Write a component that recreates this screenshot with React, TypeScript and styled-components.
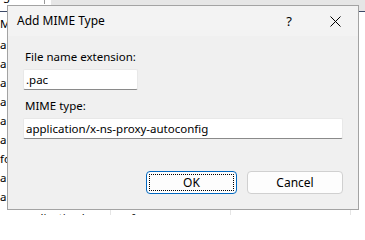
import React from 'react';
import styled, { createGlobalStyle } from 'styled-components';

const GlobalStyle = createGlobalStyle`
  html, body { margin: 0; padding: 0; background: #fff; }
  body {
    font-family: "Segoe UI", "Noto Sans", sans-serif;
    font-size: 11.5px;
    color: #000;
  }
  * { box-sizing: border-box; }
`;

const Screen = styled.div`
  position: relative;
  width: 365px;
  height: 215px;
  overflow: hidden;
  background: #fff;
`;

/* the list window behind the dialog */
const Backdrop = styled.div`
  display: flex;
  flex-direction: column;
`;

const TabStrip = styled.div`
  display: flex;
  height: 11px;
  background: #e6e6e6;
`;

const Tab = styled.div`
  display: flex;
  justify-content: space-between;
  width: 51px;
  padding-right: 6px;
  background: #fff;
  overflow: hidden;
`;

const TabText = styled.span`
  margin-top: -12px;
  line-height: 16px;
  white-space: nowrap;
`;

const TabTick = styled.span`
  width: 1px;
  height: 4px;
  background: #9a9a9a;
`;

const Rule = styled.div`
  height: 1px;
  background: #3d4a68;
`;

const Column = styled.div`
  display: flex;
  flex-direction: column;
  width: 7px;
  overflow: hidden;
`;

const Row = styled.div<{ $h: number }>`
  display: flex;
  align-items: center;
  height: ${p => p.$h}px;
  line-height: 16px;
  white-space: nowrap;
`;

const LastRow = styled.div`
  display: flex;
  height: 19px;
  padding-left: 18px;
  padding-top: 4px;
  line-height: 16px;
  white-space: nowrap;
`;

const Cell = styled.span<{ $w: number }>`
  width: ${p => p.$w}px;
  flex: none;
  padding-left: 2px;
  overflow: hidden;
  border-right: 1px solid #e5e5e5;
`;

/* the dialog */
const Dialog = styled.div`
  position: absolute;
  left: 7px;
  top: 5px;
  width: 352px;
  height: 205px;
  border: 1px solid #a3a3a3;
  background: #f0f0f0;
  display: flex;
  flex-direction: column;
`;

const TitleBar = styled.div`
  display: flex;
  align-items: center;
  height: 30px;
  padding-left: 9px;
  background: #f3f3f3;
`;

const Title = styled.span`
  flex: 1;
  line-height: 16px;
  font-size: 12px;
`;

const CaptionButton = styled.span`
  display: flex;
  align-items: center;
  justify-content: center;
  width: 46px;
  height: 30px;
  font-size: 13px;
`;

const Body = styled.div`
  display: flex;
  flex-direction: column;
  flex: 1;
  padding: 13px 15px 15px 15px;
`;

const Label = styled.label<{ $gap?: number }>`
  line-height: 16px;
  padding-left: 2px;
  margin-top: ${p => p.$gap ?? 0}px;
  margin-bottom: 4px;
`;

const Field = styled.div<{ $w?: number }>`
  display: flex;
  align-items: center;
  width: ${p => (p.$w ? `${p.$w}px` : '100%')};
  height: 21px;
  padding-left: 2px;
  background: #fff;
  border: 1px solid #e8e8e8;
  border-bottom-color: #8a8a8a;
  border-radius: 2px;
  line-height: 16px;
  white-space: nowrap;
  overflow: hidden;
`;

const Actions = styled.div`
  display: flex;
  justify-content: flex-end;
  gap: 10px;
  margin-top: auto;
`;

const Button = styled.button<{ $w: number; $default?: boolean }>`
  position: relative;
  width: ${p => p.$w}px;
  height: 23px;
  padding: 0;
  font: inherit;
  font-size: 12px;
  color: #000;
  background: #fdfdfd;
  border: 1px solid ${p => (p.$default ? '#0067c0' : '#d0d0d0')};
  border-radius: 4px;
  line-height: 16px;
`;

const FocusRing = styled.span`
  position: absolute;
  inset: 2px;
  border: 1px dotted #000;
  border-radius: 1px;
`;

const CloseIcon = () => (
  <svg width="11" height="11" viewBox="0 0 11 11">
    <path d="M0.5 0.5 L10.5 10.5 M10.5 0.5 L0.5 10.5" stroke="#000" strokeWidth="1" fill="none" />
  </svg>
);

const rows = [
  { h: 23, text: 'M' },
  { h: 19, text: 'ap' },
  { h: 19, text: 'ap' },
  { h: 19, text: 'ap' },
  { h: 19, text: 'ap' },
  { h: 19, text: 'ap' },
  { h: 19, text: 'ap' },
  { h: 19, text: 'fo' },
  { h: 19, text: 'ap' },
  { h: 19, text: 'ap' },
];

const App = () => (
  <>
    <GlobalStyle />
    <Screen>
      <Backdrop>
        <TabStrip>
          <Tab>
            <TabText>ig</TabText>
            <TabTick />
          </Tab>
        </TabStrip>
        <Rule />
        <Column>
          {rows.map((r, i) => (
            <Row key={i} $h={r.h}>{r.text}</Row>
          ))}
        </Column>
        <LastRow>
          <Cell $w={93}>application/</Cell>
          <Cell $w={120}>.swf</Cell>
          <Cell $w={120}>&nbsp;</Cell>
        </LastRow>
      </Backdrop>

      <Dialog role="dialog" aria-label="Add MIME Type">
        <TitleBar>
          <Title>Add MIME Type</Title>
          <CaptionButton>?</CaptionButton>
          <CaptionButton><CloseIcon /></CaptionButton>
        </TitleBar>
        <Body>
          <Label>File name extension:</Label>
          <Field $w={115}>.pac</Field>
          <Label $gap={8}>MIME type:</Label>
          <Field>application/x-ns-proxy-autoconfig</Field>
          <Actions>
            <Button $w={91} $default>
              <FocusRing />
              OK
            </Button>
            <Button $w={96}>Cancel</Button>
          </Actions>
        </Body>
      </Dialog>
    </Screen>
  </>
);

export default App;
